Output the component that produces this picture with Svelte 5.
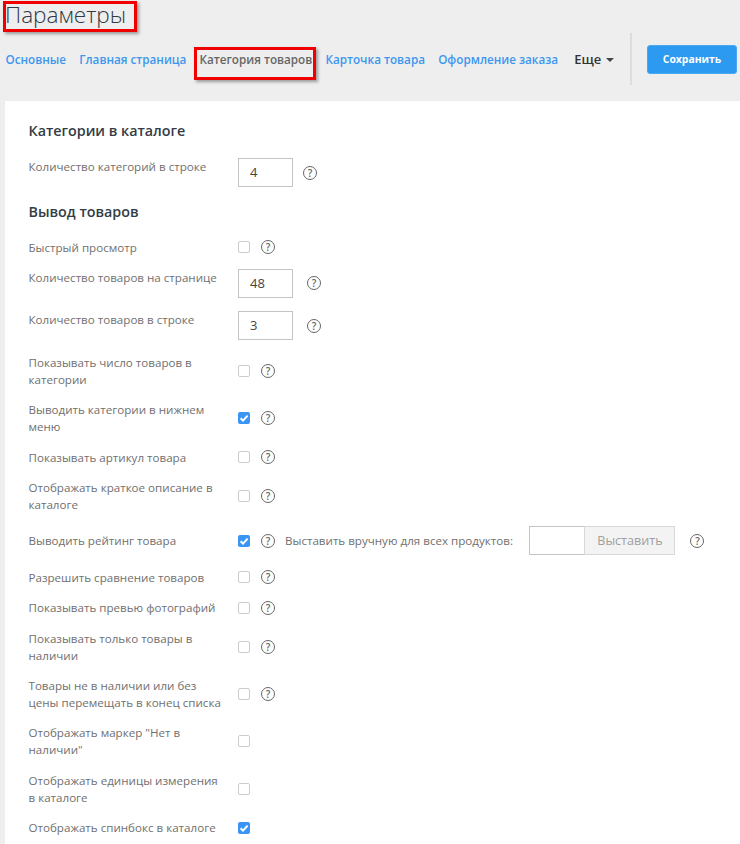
<script>
	const firstRows = [
		{ label: 'Быстрый просмотр', help: true },
		{ label: 'Количество товаров на странице', value: '48', help: true },
		{ label: 'Количество товаров в строке', value: '3', help: true },
		{ label: 'Показывать число товаров в категории', help: true },
		{ label: 'Выводить категории в нижнем меню', checked: true, help: true },
		{ label: 'Показывать артикул товара', help: true },
		{ label: 'Отображать краткое описание в каталоге', help: true },
		{ label: 'Выводить рейтинг товара', checked: true, help: true, rating: true },
		{ label: 'Разрешить сравнение товаров', help: true },
		{ label: 'Показывать превью фотографий', help: true },
		{ label: 'Показывать только товары в наличии', help: true },
		{ label: 'Товары не в наличии или без цены перемещать в конец списка', help: true },
		{ label: 'Отображать маркер "Нет в наличии"' },
		{ label: 'Отображать единицы измерения в каталоге' },
		{ label: 'Отображать спинбокс в каталоге', checked: true }
	];

	const tabs = ['Основные', 'Главная страница', 'Категория товаров', 'Карточка товара', 'Оформление заказа'];
</script>

{#snippet help()}
	<span class="help">?</span>
{/snippet}

<div class="page">
	<header class="top">
		<h1 class="title">Параметры</h1>
		<div class="title-mark"></div>
		<div class="tab-mark"></div>
		<div class="bar">
			<nav class="tabs">
				{#each tabs as tab, i}
					<span class="tab" class:active={i === 2}>{tab}</span>
				{/each}
				<span class="more">Еще <i class="caret"></i></span>
			</nav>
			<div class="divider"></div>
			<button class="save">Сохранить</button>
		</div>
	</header>

	<main class="panel">
		<h3 class="first">Категории в каталоге</h3>
		<div class="row">
			<div class="label">Количество категорий в строке</div>
			<div class="control near">
				<div class="input">4</div>
				{@render help()}
			</div>
		</div>

		<h3 class="second">Вывод товаров</h3>
		<div class="rows">
			{#each firstRows as row}
				<div class="row" class:center={!row.value}>
					<div class="label">{row.label}</div>
					<div class="control">
						{#if row.value}
							<div class="input">{row.value}</div>
						{:else}
							<span class="check" class:on={row.checked}>
								{#if row.checked}
									<svg viewBox="0 0 12 12" width="12" height="12"><path d="M2.6 6.2 5 8.6 9.6 3.6" fill="none" stroke="#fff" stroke-width="2" /></svg>
								{/if}
							</span>
						{/if}
						{#if row.help}
							{@render help()}
						{/if}
						{#if row.rating}
							<span class="manual">Выставить вручную для всех продуктов:</span>
							<div class="group">
								<div class="input blank"></div>
								<button class="set">Выставить</button>
							</div>
							{@render help()}
						{/if}
					</div>
				</div>
			{/each}
		</div>
	</main>
</div>

<style>
	:global(body) {
		background: #eeeeee;
		font-family: "Open Sans", "Noto Sans", sans-serif;
		overflow: hidden;
	}

	.page {
		height: 844px;
		display: flex;
		flex-direction: column;
	}

	.top {
		position: relative;
		height: 101px;
		flex: none;
	}

	.title {
		margin: 0;
		padding: 0 0 0 5px;
		font-size: 22.6px;
		font-weight: 300;
		line-height: 29px;
		color: #2f3a46;
	}

	.title-mark, .tab-mark {
		position: absolute;
		border: 3px solid #f00000;
		box-shadow: 2px 2px 3px rgba(0, 0, 0, 0.35);
		box-sizing: border-box;
	}

	.title-mark {
		left: 3px;
		top: 1px;
		width: 134px;
		height: 31px;
	}

	.tab-mark {
		left: 194px;
		top: 47px;
		width: 122px;
		height: 33px;
	}

	.bar {
		display: flex;
		align-items: center;
		margin-top: 4px;
		padding-left: 5.5px;
		height: 52px;
	}

	.tabs {
		display: flex;
		align-items: center;
		gap: 13.2px;
		width: 624.5px;
	}

	.tab {
		font-size: 11.7px;
		font-weight: 600;
		color: #3c97ee;
		white-space: nowrap;
	}

	.tab.active {
		color: #666666;
	}

	.more {
		margin-left: 3px;
		font-size: 13px;
		font-weight: 600;
		color: #333333;
	}

	.caret {
		display: inline-block;
		margin-left: 1px;
		border: 4px solid transparent;
		border-top-color: #444444;
		border-bottom: 0;
		vertical-align: 2px;
	}

	.divider {
		width: 2px;
		height: 52px;
		background: #dddddd;
		flex: none;
	}

	.save {
		margin-left: 15px;
		width: 90px;
		height: 29px;
		padding: 0;
		border: 1px solid #4aa8f0;
		border-radius: 3px;
		background: #2b9af0;
		color: #ffffff;
		font: 700 10.4px "Open Sans", sans-serif;
		flex: none;
	}

	.panel {
		flex: 1;
		margin-left: 5px;
		padding: 20px 23.5px 0;
		background: #ffffff;
	}

	h3 {
		margin: 0;
		font-size: 14.3px;
		font-weight: 600;
		line-height: 20px;
		color: #333c46;
	}

	h3.first {
		margin-bottom: 17px;
	}

	h3.second {
		margin-top: 15px;
		margin-bottom: 16.6px;
	}

	.rows {
		display: flex;
		flex-direction: column;
		gap: 13.4px;
	}

	.row {
		display: flex;
		align-items: flex-start;
	}

	.row.center {
		align-items: center;
	}

	.label {
		width: 209.5px;
		padding-right: 13px;
		box-sizing: border-box;
		flex: none;
		font-size: 11.6px;
		line-height: 17px;
		color: #707070;
	}

	.control {
		display: flex;
		align-items: center;
	}

	.input {
		width: 55px;
		height: 29px;
		box-sizing: border-box;
		border: 1px solid #c4c4c4;
		padding-left: 11px;
		font-size: 13px;
		line-height: 27px;
		color: #444444;
		background: #ffffff;
	}

	.input + .help {
		margin-left: 14px;
	}

	.near .input + .help {
		margin-left: 10px;
	}

	.check {
		width: 12px;
		height: 12px;
		box-sizing: border-box;
		border: 1px solid #cccccc;
		border-radius: 2px;
		flex: none;
	}

	.check.on {
		border: 0;
		background: #3a95f5;
		display: flex;
	}

	.check + .help {
		margin-left: 11px;
	}

	.help {
		width: 14px;
		height: 14px;
		box-sizing: border-box;
		border: 1px solid #666666;
		border-radius: 50%;
		font-size: 10px;
		font-weight: 600;
		line-height: 12px;
		text-align: center;
		color: #666666;
		flex: none;
	}

	.manual {
		margin-left: 10px;
		font-size: 11.6px;
		color: #707070;
		white-space: nowrap;
	}

	.group {
		display: flex;
		margin-left: 16.5px;
		margin-right: 15px;
	}

	.group .input {
		width: 56px;
	}

	.set {
		width: 91px;
		height: 29px;
		margin-left: -1px;
		padding: 0;
		border: 1px solid #d8d8d8;
		background: #f3f3f3;
		color: #a0a0a0;
		font: 400 12.6px "Open Sans", sans-serif;
	}
</style>
